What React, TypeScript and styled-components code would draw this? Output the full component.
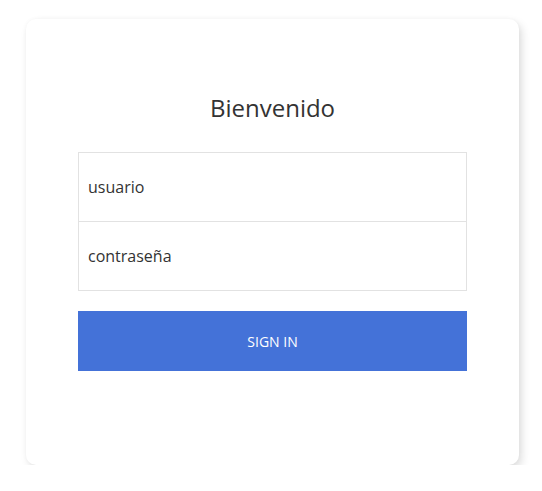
import React from "react";
import styled, { createGlobalStyle } from "styled-components";

const Global = createGlobalStyle`
  html, body { margin: 0; padding: 0; background: #ffffff; }
  body { font-family: "Open Sans", "Noto Sans", sans-serif; }
`;

const Page = styled.div`
  padding: 19px 0 0 26px;
`;

const Card = styled.div`
  box-sizing: border-box;
  width: 493px;
  height: 446px;
  background: #ffffff;
  border-radius: 10px;
  box-shadow: 3px 4px 9px rgba(0, 0, 0, 0.13), 0 0 4px rgba(0, 0, 0, 0.03);
  padding: 72px 52px 0 52px;
  display: flex;
  flex-direction: column;
`;

const Title = styled.h1`
  margin: 0;
  font-weight: 400;
  font-size: 24px;
  line-height: 34px;
  color: #333;
  text-align: center;
`;

const Fields = styled.div`
  margin-top: 27px;
  border: 1px solid #e2e2e2;
  display: flex;
  flex-direction: column;
`;

const Field = styled.input<{ $last?: boolean }>`
  box-sizing: border-box;
  height: ${(p) => (p.$last ? 68 : 69)}px;
  border: none;
  border-bottom: ${(p) => (p.$last ? "none" : "1px solid #e2e2e2")};
  padding: 0 9px;
  font-family: inherit;
  font-size: 16px;
  color: #333;
  background: transparent;
  outline: none;
  &::placeholder { color: #333; opacity: 1; }
`;

const Button = styled.button`
  margin-top: 20px;
  height: 60px;
  border: none;
  background: #4472d8;
  color: #fff;
  font-family: inherit;
  font-size: 14px;
  text-transform: uppercase;
  cursor: pointer;
`;

export default function App() {
  return (
    <>
      <Global />
      <Page>
        <Card>
          <Title>Bienvenido</Title>
          <Fields>
            <Field placeholder="usuario" />
            <Field $last type="password" placeholder="contraseña" />
          </Fields>
          <Button>Sign in</Button>
        </Card>
      </Page>
    </>
  );
}
